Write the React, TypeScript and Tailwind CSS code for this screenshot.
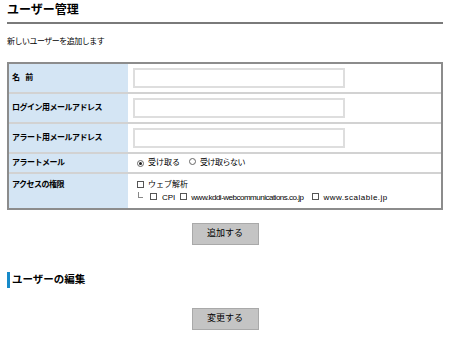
import React from 'react';

const Check = () => (
  <span className="inline-block w-[7px] h-[7px] border border-[#555] bg-white shrink-0" />
);

const Radio = ({ checked }: { checked?: boolean }) => (
  <span className="inline-flex items-center justify-center w-[7px] h-[7px] rounded-full border border-[#666] bg-white shrink-0">
    {checked && <span className="w-[3px] h-[3px] rounded-full bg-[#222]" />}
  </span>
);

const TextInput = () => (
  <input type="text" className="w-[212px] h-[20px] border-2 border-[#dedede] bg-white outline-none" />
);

export default function App() {
  return (
    <div className="w-[450px] h-[338px] bg-white text-black font-['Liberation_Sans','Noto_Sans_CJK_JP',sans-serif] px-[7px]">
      <h1 className="pt-[2px] pb-[4px] text-[12px] leading-[16px] font-bold border-b-2 border-[#7a7a7a]">ユーザー管理</h1>
      <p className="mt-[11px] text-[8px] leading-[14px] tracking-[-0.5px]">新しいユーザーを追加します</p>

      <div className="mt-[13px] border-2 border-[#8c8c8c] text-[8px]">
        <div className="flex h-[28px]">
          <div className="w-[119px] bg-[#d4e5f4] pl-[3px] flex items-center font-bold [word-spacing:3px]">名 前</div>
          <div className="flex-1 pl-[5px] flex items-center"><TextInput /></div>
        </div>
        <div className="flex h-[30px] border-t-2 border-[#d2d2d2]">
          <div className="w-[119px] bg-[#d4e5f4] pl-[3px] flex items-center font-bold tracking-[-0.5px]">ログイン用メールアドレス</div>
          <div className="flex-1 pl-[5px] flex items-center"><TextInput /></div>
        </div>
        <div className="flex h-[30px] border-t-2 border-[#d2d2d2]">
          <div className="w-[119px] bg-[#d4e5f4] pl-[3px] flex items-center font-bold tracking-[-0.5px]">アラート用メールアドレス</div>
          <div className="flex-1 pl-[5px] flex items-center"><TextInput /></div>
        </div>
        <div className="flex h-[20px] border-t-2 border-[#d2d2d2]">
          <div className="w-[119px] bg-[#d4e5f4] pl-[3px] flex items-center font-bold tracking-[-0.5px]">アラートメール</div>
          <div className="flex-1 pl-[9px] flex items-center">
            <Radio checked />
            <span className="ml-[4px]">受け取る</span>
            <span className="ml-[9px]"><Radio /></span>
            <span className="ml-[4px] tracking-[-0.5px]">受け取らない</span>
          </div>
        </div>
        <div className="flex h-[36px] border-t-2 border-[#d2d2d2] leading-[13px]">
          <div className="w-[119px] bg-[#d4e5f4] pl-[3px] pt-[4px] font-bold tracking-[-0.5px]">アクセスの権限</div>
          <div className="flex-1 pl-[9px] pt-[4px]">
            <div className="flex items-center">
              <Check />
              <span className="ml-[4px]">ウェブ解析</span>
            </div>
            <div className="flex items-center">
              <span className="inline-block w-[5px] h-[6px] border-l border-b border-[#888] -mt-[5px] ml-[1px]" />
              <span className="ml-[7px]"><Check /></span>
              <span className="ml-[5px]">CPI</span>
              <span className="ml-[5px]"><Check /></span>
              <span className="ml-[4px] tracking-[-0.5px]">www.kddi-webcommunications.co.jp</span>
              <span className="ml-[9px]"><Check /></span>
              <span className="ml-[4px] tracking-[0.5px]">www.scalable.jp</span>
            </div>
          </div>
        </div>
      </div>

      <div className="mt-[13px] flex justify-center">
        <button className="w-[67px] h-[22px] bg-[#c4c4c4] border border-[#a9a9a9] text-[9px]">追加する</button>
      </div>

      <div className="mt-[27px] flex items-center">
        <span className="w-[3px] h-[16px] bg-[#178ac9]" />
        <h2 className="ml-[2px] text-[10.5px] font-bold">ユーザーの編集</h2>
      </div>

      <div className="mt-[20px] flex justify-center">
        <button className="w-[67px] h-[22px] bg-[#c4c4c4] border border-[#a9a9a9] text-[9px]">変更する</button>
      </div>
    </div>
  );
}
